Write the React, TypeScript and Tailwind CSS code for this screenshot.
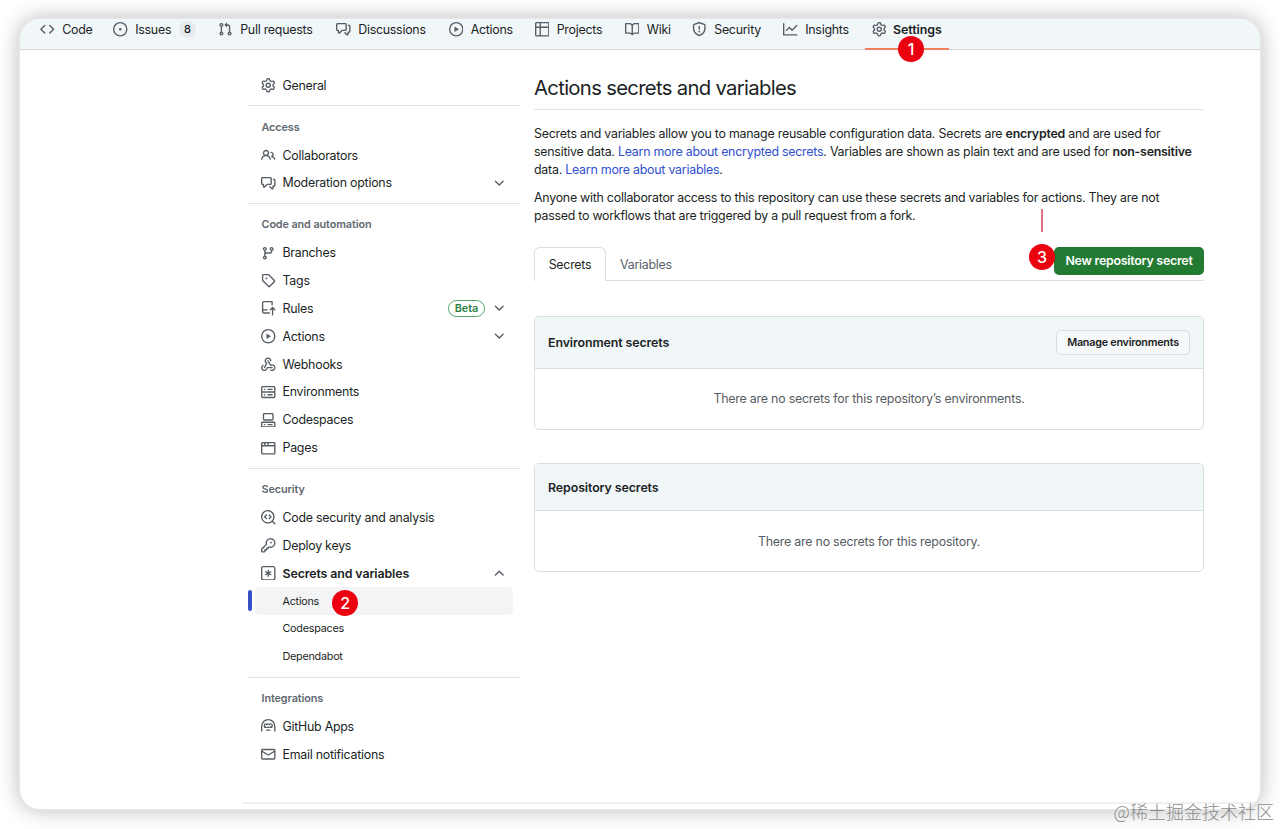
import React from "react";

// 16px octicon outlines
const paths: Record<string, string> = {
    code: "m11.28 3.22 4.25 4.25a.75.75 0 0 1 0 1.06l-4.25 4.25a.749.749 0 0 1-1.275-.326.749.749 0 0 1 .215-.734L13.94 8l-3.72-3.72a.749.749 0 0 1 .326-1.275.749.749 0 0 1 .734.215Zm-6.56 0a.751.751 0 0 1 1.042.018.751.751 0 0 1 .018 1.042L2.06 8l3.72 3.72a.749.749 0 0 1-.326 1.275.749.749 0 0 1-.734-.215L.47 8.53a.75.75 0 0 1 0-1.06Z",
    issue: "M8 9.5a1.5 1.5 0 1 0 0-3 1.5 1.5 0 0 0 0 3ZM8 0a8 8 0 1 1 0 16A8 8 0 0 1 8 0ZM1.5 8a6.5 6.5 0 1 0 13 0 6.5 6.5 0 0 0-13 0Z",
    pull: "M1.5 3.25a2.25 2.25 0 1 1 3 2.122v5.256a2.251 2.251 0 1 1-1.5 0V5.372A2.25 2.25 0 0 1 1.5 3.25Zm5.677-.177L9.573.677A.25.25 0 0 1 10 .854V2.5h1A2.5 2.5 0 0 1 13.5 5v5.628a2.251 2.251 0 1 1-1.5 0V5a1 1 0 0 0-1-1h-1v1.646a.25.25 0 0 1-.427.177L7.177 3.427a.25.25 0 0 1 0-.354ZM3.75 2.5a.75.75 0 1 0 0 1.5.75.75 0 0 0 0-1.5Zm0 9.5a.75.75 0 1 0 0 1.5.75.75 0 0 0 0-1.5Zm8.25.75a.75.75 0 1 0 1.5 0 .75.75 0 0 0-1.5 0Z",
    discussion: "M1.75 1h8.5c.966 0 1.75.784 1.75 1.75v5.5A1.75 1.75 0 0 1 10.25 10H7.061l-2.574 2.573A1.458 1.458 0 0 1 2 11.543V10h-.25A1.75 1.75 0 0 1 0 8.25v-5.5C0 1.784.784 1 1.75 1ZM1.5 2.75v5.5c0 .138.112.25.25.25h1a.75.75 0 0 1 .75.75v2.19l2.72-2.72a.749.749 0 0 1 .53-.22h3.5a.25.25 0 0 0 .25-.25v-5.5a.25.25 0 0 0-.25-.25h-8.5a.25.25 0 0 0-.25.25Zm13 2a.25.25 0 0 0-.25-.25h-.5a.75.75 0 0 1 0-1.5h.5c.966 0 1.75.784 1.75 1.75v5.5A1.75 1.75 0 0 1 14.25 12H14v1.543a1.458 1.458 0 0 1-2.487 1.03L9.22 12.28a.749.749 0 0 1 .326-1.275.749.749 0 0 1 .734.215l2.22 2.22v-2.19a.75.75 0 0 1 .75-.75h1a.25.25 0 0 0 .25-.25Z",
    play: "M8 0a8 8 0 1 1 0 16A8 8 0 0 1 8 0ZM1.5 8a6.5 6.5 0 1 0 13 0 6.5 6.5 0 0 0-13 0Zm4.879-2.773 4.264 2.559a.25.25 0 0 1 0 .428l-4.264 2.559A.25.25 0 0 1 6 10.559V5.442a.25.25 0 0 1 .379-.215Z",
    table: "M0 1.75C0 .784.784 0 1.75 0h12.5C15.216 0 16 .784 16 1.75v12.5A1.75 1.75 0 0 1 14.25 16H1.75A1.75 1.75 0 0 1 0 14.25ZM6.5 6.5v8h7.75a.25.25 0 0 0 .25-.25V6.5Zm8-1.5V1.75a.25.25 0 0 0-.25-.25H6.5V5Zm-13 1.5v7.75c0 .138.112.25.25.25H5v-8ZM5 5V1.5H1.75a.25.25 0 0 0-.25.25V5Z",
    book: "M0 1.75A.75.75 0 0 1 .75 1h4.253c1.227 0 2.317.59 3 1.501A3.743 3.743 0 0 1 11.006 1h4.245a.75.75 0 0 1 .75.75v10.5a.75.75 0 0 1-.75.75h-4.507a2.25 2.25 0 0 0-1.591.659l-.622.621a.75.75 0 0 1-1.06 0l-.622-.621A2.25 2.25 0 0 0 5.258 13H.75a.75.75 0 0 1-.75-.75Zm7.251 10.324.004-5.073-.002-2.253A2.25 2.25 0 0 0 5.003 2.5H1.5v9h3.757a3.75 3.75 0 0 1 1.994.574ZM8.755 4.75l-.004 7.322a3.752 3.752 0 0 1 1.992-.572H14.5v-9h-3.495a2.25 2.25 0 0 0-2.25 2.25Z",
    shield: "M7.467.133a1.748 1.748 0 0 1 1.066 0l5.25 1.68A1.75 1.75 0 0 1 15 3.48V7c0 1.566-.32 3.182-1.303 4.682-.983 1.498-2.585 2.813-5.032 3.855a1.697 1.697 0 0 1-1.33 0c-2.447-1.042-4.049-2.357-5.032-3.855C1.32 10.182 1 8.566 1 7V3.48a1.75 1.75 0 0 1 1.217-1.667Zm.61 1.429a.25.25 0 0 0-.153 0l-5.25 1.68a.25.25 0 0 0-.174.238V7c0 1.358.275 2.666 1.057 3.86.784 1.194 2.121 2.34 4.366 3.297a.196.196 0 0 0 .154 0c2.245-.956 3.582-2.104 4.366-3.298C13.225 9.666 13.5 8.36 13.5 7V3.48a.251.251 0 0 0-.174-.237l-5.25-1.68ZM8.75 4.75v3a.75.75 0 0 1-1.5 0v-3a.75.75 0 0 1 1.5 0ZM9 10.5a1 1 0 1 1-2 0 1 1 0 0 1 2 0Z",
    graph: "M1.5 1.75V13.5h13.75a.75.75 0 0 1 0 1.5H.75a.75.75 0 0 1-.75-.75V1.75a.75.75 0 0 1 1.5 0Zm14.28 2.53-5.25 5.25a.75.75 0 0 1-1.06 0L7 7.06 4.28 9.78a.751.751 0 0 1-1.042-.018.751.751 0 0 1-.018-1.042l3.25-3.25a.75.75 0 0 1 1.06 0L10 7.94l4.72-4.72a.751.751 0 0 1 1.042.018.751.751 0 0 1 .018 1.042Z",
    gear: "M8 0a8.2 8.2 0 0 1 .701.031C9.444.095 9.99.645 10.16 1.29l.288 1.107c.018.066.079.158.212.224.231.114.454.243.668.386.123.082.233.09.299.071l1.103-.303c.644-.176 1.392.021 1.82.63.27.385.506.792.704 1.218.315.675.111 1.422-.364 1.891l-.814.806c-.049.048-.098.147-.088.294.016.257.016.515 0 .772-.01.147.038.246.088.294l.814.806c.475.469.679 1.216.364 1.891a7.977 7.977 0 0 1-.704 1.217c-.428.61-1.176.807-1.82.63l-1.102-.302c-.067-.019-.177-.011-.3.071a5.909 5.909 0 0 1-.668.386c-.133.066-.194.158-.211.224l-.29 1.106c-.168.646-.715 1.196-1.458 1.26a8.006 8.006 0 0 1-1.402 0c-.743-.064-1.289-.614-1.458-1.26l-.289-1.106c-.018-.066-.079-.158-.212-.224a5.738 5.738 0 0 1-.668-.386c-.123-.082-.233-.09-.299-.071l-1.103.303c-.644.176-1.392-.021-1.82-.63a8.12 8.12 0 0 1-.704-1.218c-.315-.675-.111-1.422.363-1.891l.815-.806c.05-.048.098-.147.088-.294a6.214 6.214 0 0 1 0-.772c.01-.147-.038-.246-.088-.294l-.815-.806C.635 6.045.431 5.298.746 4.623a7.92 7.92 0 0 1 .704-1.217c.428-.61 1.176-.807 1.82-.63l1.102.302c.067.019.177.011.3-.071.214-.143.437-.272.668-.386.133-.066.194-.158.211-.224l.29-1.106C6.009.645 6.556.095 7.299.03 7.53.01 7.764 0 8 0Zm-.571 1.525c-.036.003-.108.036-.137.146l-.289 1.105c-.147.561-.549.967-.998 1.189-.173.086-.34.183-.5.29-.417.278-.97.423-1.529.27l-1.103-.303c-.109-.03-.175.016-.195.045-.22.312-.412.644-.573.99-.014.031-.021.11.059.19l.815.806c.411.406.562.957.53 1.456a4.709 4.709 0 0 0 0 .582c.032.499-.119 1.05-.53 1.456l-.815.806c-.081.08-.073.159-.059.19.162.346.353.677.573.989.02.03.085.076.195.046l1.102-.303c.56-.153 1.113-.008 1.53.27.161.107.328.204.501.29.447.222.85.629.997 1.189l.289 1.105c.029.109.101.143.137.146a6.6 6.6 0 0 0 1.142 0c.036-.003.108-.036.137-.146l.289-1.105c.147-.561.549-.967.998-1.189.173-.086.34-.183.5-.29.417-.278.97-.423 1.529-.27l1.103.303c.109.029.175-.016.195-.045.22-.313.411-.644.573-.99.014-.031.021-.11-.059-.19l-.815-.806c-.411-.406-.562-.957-.53-1.456a4.709 4.709 0 0 0 0-.582c-.032-.499.119-1.05.53-1.456l.815-.806c.081-.08.073-.159.059-.19a6.464 6.464 0 0 0-.573-.989c-.02-.03-.085-.076-.195-.046l-1.102.303c-.56.153-1.113.008-1.53-.27a4.44 4.44 0 0 0-.501-.29c-.447-.222-.85-.629-.997-1.189l-.289-1.105c-.029-.11-.101-.143-.137-.146a6.6 6.6 0 0 0-1.142 0ZM11 8a3 3 0 1 1-6 0 3 3 0 0 1 6 0ZM9.5 8a1.5 1.5 0 1 0-3.001.001A1.5 1.5 0 0 0 9.5 8Z",
    people: "M2 5.5a3.5 3.5 0 1 1 5.898 2.549 5.508 5.508 0 0 1 3.034 4.084.75.75 0 1 1-1.482.235 4 4 0 0 0-7.9 0 .75.75 0 0 1-1.482-.236A5.507 5.507 0 0 1 3.102 8.05 3.493 3.493 0 0 1 2 5.5ZM11 4a3.001 3.001 0 0 1 2.22 5.018 5.01 5.01 0 0 1 2.56 3.012.749.749 0 0 1-.885.954.752.752 0 0 1-.549-.514 3.507 3.507 0 0 0-2.522-2.372.75.75 0 0 1-.574-.73v-.352a.75.75 0 0 1 .416-.672A1.5 1.5 0 0 0 11 5.5.75.75 0 0 1 11 4Zm-5.5-.5a2 2 0 1 0-.001 3.999A2 2 0 0 0 5.5 3.5Z",
    branch: "M9.5 3.25a2.25 2.25 0 1 1 3 2.122V6A2.5 2.5 0 0 1 10 8.5H6a1 1 0 0 0-1 1v1.128a2.251 2.251 0 1 1-1.5 0V5.372a2.25 2.25 0 1 1 1.5 0v1.836A2.493 2.493 0 0 1 6 7h4a1 1 0 0 0 1-1v-.628A2.25 2.25 0 0 1 9.5 3.25Zm-6 0a.75.75 0 1 0 1.5 0 .75.75 0 0 0-1.5 0Zm8.25-.75a.75.75 0 1 0 0 1.5.75.75 0 0 0 0-1.5ZM4.25 12a.75.75 0 1 0 0 1.5.75.75 0 0 0 0-1.5Z",
    tag: "M1 7.775V2.75C1 1.784 1.784 1 2.75 1h5.025c.464 0 .91.184 1.238.513l6.25 6.25a1.75 1.75 0 0 1 0 2.474l-5.026 5.026a1.75 1.75 0 0 1-2.474 0l-6.25-6.25A1.752 1.752 0 0 1 1 7.775Zm1.5 0c0 .066.026.13.073.177l6.25 6.25a.25.25 0 0 0 .354 0l5.025-5.025a.25.25 0 0 0 0-.354l-6.25-6.25a.25.25 0 0 0-.177-.073H2.75a.25.25 0 0 0-.25.25ZM6 5a1 1 0 1 1 0 2 1 1 0 0 1 0-2Z",
    push: "M1 2.5A2.5 2.5 0 0 1 3.5 0h8.75a.75.75 0 0 1 .75.75v3.5a.75.75 0 0 1-1.5 0V1.5h-8a1 1 0 0 0-1 1v6.708A2.493 2.493 0 0 1 3.5 9h3.25a.75.75 0 0 1 0 1.5H3.5a1 1 0 0 0 0 2h5.75a.75.75 0 0 1 0 1.5H3.5A2.5 2.5 0 0 1 1 11.5Zm12.5 12.75a.75.75 0 0 1-1.5 0V9.06l-1.22 1.22a.75.75 0 0 1-1.06-1.06l2.5-2.5a.75.75 0 0 1 1.06 0l2.5 2.5a.75.75 0 0 1-1.06 1.06L13.5 9.06Z",
    webhook: "M5.5 4.25a2.25 2.25 0 0 1 4.5 0 .75.75 0 0 0 1.5 0 3.75 3.75 0 1 0-6.14 2.889l-2.272 4.258a.75.75 0 0 0 1.324.706L7 7.25a.75.75 0 0 0-.309-1.015A2.25 2.25 0 0 1 5.5 4.25ZM7.364 3.607a.75.75 0 0 1 1.03.257l2.608 4.349a3.75 3.75 0 1 1-.628 6.785.75.75 0 0 1 .752-1.299 2.25 2.25 0 1 0-.033-3.88.75.75 0 0 1-1.03-.256L7.107 4.636a.75.75 0 0 1 .257-1.03ZM2.9 8.776A.75.75 0 0 1 2.625 9.8 2.25 2.25 0 1 0 6 11.75a.75.75 0 0 1 .75-.751h5.5a.75.75 0 0 1 0 1.5H7.425a3.751 3.751 0 1 1-5.55-3.998.75.75 0 0 1 1.024.274Z",
    server: "M1.75 1h12.5c.966 0 1.75.784 1.75 1.75v4c0 .372-.116.717-.314 1 .198.283.314.628.314 1v4a1.75 1.75 0 0 1-1.75 1.75H1.75A1.75 1.75 0 0 1 0 12.75v-4c0-.358.109-.707.314-1a1.739 1.739 0 0 1-.314-1v-4C0 1.784.784 1 1.75 1ZM1.5 2.75v4c0 .138.112.25.25.25h12.5a.25.25 0 0 0 .25-.25v-4a.25.25 0 0 0-.25-.25H1.75a.25.25 0 0 0-.25.25Zm.25 5.75a.25.25 0 0 0-.25.25v4c0 .138.112.25.25.25h12.5a.25.25 0 0 0 .25-.25v-4a.25.25 0 0 0-.25-.25ZM7 4.75A.75.75 0 0 1 7.75 4h4.5a.75.75 0 0 1 0 1.5h-4.5A.75.75 0 0 1 7 4.75ZM7.75 10h4.5a.75.75 0 0 1 0 1.5h-4.5a.75.75 0 0 1 0-1.5ZM3 4.75A.75.75 0 0 1 3.75 4h.5a.75.75 0 0 1 0 1.5h-.5A.75.75 0 0 1 3 4.75ZM3.75 10h.5a.75.75 0 0 1 0 1.5h-.5a.75.75 0 0 1 0-1.5Z",
    codespaces: "M0 11.25c0-.966.784-1.75 1.75-1.75h12.5c.966 0 1.75.784 1.75 1.75v3A1.75 1.75 0 0 1 14.25 16H1.75A1.75 1.75 0 0 1 0 14.25Zm2-9.5C2 .784 2.784 0 3.75 0h8.5C13.216 0 14 .784 14 1.75v5a1.75 1.75 0 0 1-1.75 1.75h-8.5A1.75 1.75 0 0 1 2 6.75Zm1.75-.25a.25.25 0 0 0-.25.25v5c0 .138.112.25.25.25h8.5a.25.25 0 0 0 .25-.25v-5a.25.25 0 0 0-.25-.25Zm-2 9.5a.25.25 0 0 0-.25.25v3c0 .138.112.25.25.25h12.5a.25.25 0 0 0 .25-.25v-3a.25.25 0 0 0-.25-.25ZM7 12.75a.75.75 0 0 1 .75-.75h4.5a.75.75 0 0 1 0 1.5h-4.5a.75.75 0 0 1-.75-.75Zm-4 0a.75.75 0 0 1 .75-.75h.5a.75.75 0 0 1 0 1.5h-.5a.75.75 0 0 1-.75-.75Z",
    browser: "M0 2.75C0 1.784.784 1 1.75 1h12.5c.966 0 1.75.784 1.75 1.75v10.5A1.75 1.75 0 0 1 14.25 15H1.75A1.75 1.75 0 0 1 0 13.25ZM14.5 6h-13v7.25c0 .138.112.25.25.25h12.5a.25.25 0 0 0 .25-.25Zm-6-3.5v2h6V2.75a.25.25 0 0 0-.25-.25ZM5 2.5v2h2v-2Zm-3.25 0a.25.25 0 0 0-.25.25V4.5h2v-2Z",
    codescan: "M8.47 4.97a.75.75 0 0 0 0 1.06L9.94 7.5 8.47 8.97a.75.75 0 1 0 1.06 1.06l2-2a.75.75 0 0 0 0-1.06l-2-2a.75.75 0 0 0-1.06 0ZM6.53 6.03a.75.75 0 0 0-1.06-1.06l-2 2a.75.75 0 0 0 0 1.06l2 2a.75.75 0 1 0 1.06-1.06L5.06 7.5l1.47-1.47ZM12.246 13.307a7.501 7.501 0 1 1 1.06-1.06l2.474 2.473a.749.749 0 0 1-.326 1.275.749.749 0 0 1-.734-.215ZM1.5 7.5a6.002 6.002 0 0 0 3.608 5.504 6.002 6.002 0 0 0 6.486-1.117.748.748 0 0 1 .292-.293A6 6 0 1 0 1.5 7.5Z",
    key: "M10.5 0a5.499 5.499 0 1 1-1.288 10.848l-.932.932a.749.749 0 0 1-.53.22H7v.75a.749.749 0 0 1-.22.53l-.5.5a.749.749 0 0 1-.53.22H5v.75a.749.749 0 0 1-.22.53l-.5.5a.749.749 0 0 1-.53.22h-2A1.75 1.75 0 0 1 0 14.25v-2c0-.199.079-.389.22-.53l4.932-4.932A5.5 5.5 0 0 1 10.5 0Zm-4 5.5c-.001.431.069.86.205 1.269a.75.75 0 0 1-.181.768L1.5 12.56v1.69c0 .138.112.25.25.25h1.69l.06-.06v-1.19a.75.75 0 0 1 .75-.75h1.19l.06-.06v-1.19a.75.75 0 0 1 .75-.75h1.19l1.023-1.025a.75.75 0 0 1 .768-.18A4 4 0 1 0 6.5 5.5ZM11 6a1 1 0 1 1 0-2 1 1 0 0 1 0 2Z",
    asterisk: "M0 2.75A2.75 2.75 0 0 1 2.75 0h10.5A2.75 2.75 0 0 1 16 2.75v10.5A2.75 2.75 0 0 1 13.25 16H2.75A2.75 2.75 0 0 1 0 13.25ZM2.75 1.5c-.69 0-1.25.56-1.25 1.25v10.5c0 .69.56 1.25 1.25 1.25h10.5c.69 0 1.25-.56 1.25-1.25V2.75c0-.69-.56-1.25-1.25-1.25ZM8 4a.75.75 0 0 1 .75.75V6.7l1.69-.975a.75.75 0 0 1 .75 1.3L9.5 8l1.69.976a.75.75 0 0 1-.75 1.298L8.75 9.3v1.951a.75.75 0 0 1-1.5 0V9.299l-1.69.976a.75.75 0 0 1-.75-1.3L6.5 8l-1.69-.975a.75.75 0 0 1 .75-1.3l1.69.976V4.75A.75.75 0 0 1 8 4Z",
    hubot: "M0 8a8 8 0 1 1 16 0v5.25a.75.75 0 0 1-1.5 0V8a6.5 6.5 0 1 0-13 0v5.25a.75.75 0 0 1-1.5 0V8Zm5.5 4.25a.75.75 0 0 1 .75-.75h3.5a.75.75 0 0 1 0 1.5h-3.5a.75.75 0 0 1-.75-.75ZM3 6.75C3 5.784 3.784 5 4.75 5h6.5c.966 0 1.75.784 1.75 1.75v1.5A1.75 1.75 0 0 1 11.25 10h-6.5A1.75 1.75 0 0 1 3 8.25Zm1.47-.53a.75.75 0 0 1 1.06 0l.97.97.97-.97a.75.75 0 0 1 1.06 0l.97.97.97-.97a.75.75 0 1 1 1.06 1.06l-1.5 1.5a.75.75 0 0 1-1.06 0L8 7.81l-.97.97a.75.75 0 0 1-1.06 0l-1.5-1.5a.75.75 0 0 1 0-1.06Z",
    mail: "M1.75 2h12.5c.966 0 1.75.784 1.75 1.75v8.5A1.75 1.75 0 0 1 14.25 14H1.75A1.75 1.75 0 0 1 0 12.25v-8.5C0 2.784.784 2 1.75 2ZM1.5 12.251c0 .138.112.25.25.25h12.5a.25.25 0 0 0 .25-.25V5.809L8.38 9.397a.75.75 0 0 1-.76 0L1.5 5.809v6.442Zm13-8.181v-.32a.25.25 0 0 0-.25-.25H1.75a.25.25 0 0 0-.25.25v.32L8 7.88Z",
    down: "M12.78 5.22a.749.749 0 0 1 0 1.06l-4.25 4.25a.749.749 0 0 1-1.06 0L3.22 6.28a.749.749 0 1 1 1.06-1.06L8 8.939l3.72-3.719a.749.749 0 0 1 1.06 0Z",
    up: "M3.22 10.53a.749.749 0 0 1 0-1.06l4.25-4.25a.749.749 0 0 1 1.06 0l4.25 4.25a.749.749 0 1 1-1.06 1.06L8 6.811 4.28 10.53a.749.749 0 0 1-1.06 0Z",
};

const Icon = ({ name }: { name: string }) => (
    <svg viewBox="0 0 16 16" className="w-[14.5px] h-[14.5px] shrink-0 fill-[#565d65]" fillRule="evenodd">
        <path d={paths[name]} />
    </svg>
);

const Step = ({ n }: { n: number }) => (
    <span className="flex h-[26px] w-[26px] items-center justify-center rounded-full bg-[#eb000f] pb-px text-[16px] font-medium leading-none text-white">{n}</span>
);

type NavItem = { icon: string; label: string; width: string; count?: number };

const nav: NavItem[] = [
    { icon: "code", label: "Code", width: "w-[73px]" },
    { icon: "issue", label: "Issues", width: "w-[105px]", count: 8 },
    { icon: "pull", label: "Pull requests", width: "w-[118px]" },
    { icon: "discussion", label: "Discussions", width: "w-[112.5px]" },
    { icon: "play", label: "Actions", width: "w-[86px]" },
    { icon: "table", label: "Projects", width: "w-[90px]" },
    { icon: "book", label: "Wiki", width: "w-[67.5px]" },
    { icon: "shield", label: "Security", width: "w-[91px]" },
    { icon: "graph", label: "Insights", width: "w-[82px]" },
];

type SideItem = { icon?: string; label: string; arrow?: string; beta?: boolean; bold?: boolean; active?: boolean };

const groups: { title: string; items: SideItem[] }[] = [
    {
        title: "Access",
        items: [
            { icon: "people", label: "Collaborators" },
            { icon: "discussion", label: "Moderation options", arrow: "down" },
        ],
    },
    {
        title: "Code and automation",
        items: [
            { icon: "branch", label: "Branches" },
            { icon: "tag", label: "Tags" },
            { icon: "push", label: "Rules", arrow: "down", beta: true },
            { icon: "play", label: "Actions", arrow: "down" },
            { icon: "webhook", label: "Webhooks" },
            { icon: "server", label: "Environments" },
            { icon: "codespaces", label: "Codespaces" },
            { icon: "browser", label: "Pages" },
        ],
    },
    {
        title: "Security",
        items: [
            { icon: "codescan", label: "Code security and analysis" },
            { icon: "key", label: "Deploy keys" },
            { icon: "asterisk", label: "Secrets and variables", arrow: "up", bold: true },
            { label: "Actions", active: true },
            { label: "Codespaces" },
            { label: "Dependabot" },
        ],
    },
    {
        title: "Integrations",
        items: [
            { icon: "hubot", label: "GitHub Apps" },
            { icon: "mail", label: "Email notifications" },
        ],
    },
];

const Header = () => (
    <nav className="flex h-[31px] items-start border-b border-[#d0d5d9] bg-[#f1f6f9] pl-[20px]">
        {nav.map((item) => (
            <div key={item.label} className={`flex h-[21px] shrink-0 items-center gap-[7.7px] ${item.width}`}>
                <Icon name={item.icon} />
                <span className="pt-[1.6px]">{item.label}</span>
                {item.count && <span className="flex h-[17px] w-[17px] items-center justify-center rounded-full bg-[#e6eaed] text-[11px] font-medium">{item.count}</span>}
            </div>
        ))}
        <div className="relative flex h-[31px] w-[84px] shrink-0 items-start border-b-2 border-b-[#f0805f] pl-[7px]">
            <div className="flex h-[21px] items-center gap-[6.5px]">
                <Icon name="gear" />
                <span className="pt-[1.6px] font-semibold tracking-[-0.05px]">Settings</span>
            </div>
            <div className="absolute left-[33px] top-[17px]"><Step n={1} /></div>
        </div>
    </nav>
);

const SideRow = ({ item }: { item: SideItem }) => (
    <li className={`relative mr-[7px] flex h-[27.85px] items-center gap-[6.9px] pr-[7px] ${item.active ? "ml-[7px] rounded-[5px] bg-[#f3f4f6] pl-[6.1px]" : "pl-[13.1px]"}`}>
        {item.active && <span className="absolute -left-[7.5px] top-[3px] h-[21px] w-[4px] rounded-sm bg-[#3650c8]"></span>}
        {item.icon ? <Icon name={item.icon} /> : <span className="w-[14.5px]"></span>}
        <span className={item.bold ? "pt-[1.2px] font-semibold tracking-[-0.12px]" : item.icon ? "pt-[1.2px]" : "pt-[1.2px] text-[10.8px]"}>{item.label}</span>
        {item.active && <div className="absolute left-[77px] top-[3px]"><Step n={2} /></div>}
        <span className="ml-auto flex items-center gap-[6.5px]">
            {item.beta && <span className="flex h-[17px] w-[37px] items-center justify-center rounded-full border border-[#55a269] pt-px text-[10.8px] font-semibold tracking-normal text-[#2a7f3e]">Beta</span>}
            {item.arrow && <Icon name={item.arrow} />}
        </span>
    </li>
);

const Sidebar = () => (
    <aside className="w-[272px]">
        <ul className="h-[55.3px] pt-[21.4px]">
            <SideRow item={{ icon: "gear", label: "General" }} />
        </ul>
        {groups.map((group) => (
            <section key={group.title} className="border-t border-[#e1e4e7] pb-[5.9px] pt-[7.2px]">
                <h3 className="flex h-[27.85px] items-center pl-[13.5px] pt-[0.8px] text-[10.8px] font-semibold tracking-[-0.08px] text-[#606870]">{group.title}</h3>
                <ul>
                    {group.items.map((item) => <SideRow key={item.label} item={item} />)}
                </ul>
            </section>
        ))}
    </aside>
);

const Main = () => (
    <main className="ml-[14px] w-[670px]">
        <h1 className="flex h-[60px] items-center border-b border-[#e2e5e8] pt-[17px] text-[20.3px] tracking-[-0.69px]">Actions secrets and variables</h1>
        <p className="mt-[15px] whitespace-nowrap leading-[18.2px] tracking-[-0.24px]">
            Secrets and variables allow you to manage reusable configuration data. Secrets are <b className="font-semibold">encrypted</b> and are used for<br />
            sensitive data. <a className="text-[#2f50cf]">Learn more about encrypted secrets</a>. Variables are shown as plain text and are used for <b className="font-semibold">non-sensitive</b><br />
            data. <a className="text-[#2f50cf]">Learn more about variables</a>.
        </p>
        <p className="mt-[9px] whitespace-nowrap leading-[18.2px]">
            Anyone with collaborator access to this repository can use these secrets and variables for actions. They are not<br />
            passed to workflows that are triggered by a pull request from a fork.
        </p>
        <div className="relative mt-[22px] flex h-[34px] items-start border-b border-[#d9dee1]">
            <div className="flex h-[34px] w-[72px] items-center justify-center rounded-t-md border border-b-0 border-[#d9dee1] bg-white pt-[2px]">Secrets</div>
            <div className="flex h-[34px] items-center pl-[14px] pt-[2.5px] text-[#59616a]">Variables</div>
            <button className="ml-auto h-[28px] w-[150px] rounded-[5px] bg-[#237b33] pt-[1.5px] font-semibold text-white">New repository secret</button>
            <span className="absolute left-[507px] -top-[38px] h-[23px] w-[2px] bg-[#dc7480]"></span>
            <div className="absolute left-[495px] -top-[3px]"><Step n={3} /></div>
        </div>
        <section className="mt-[35px] h-[114px] rounded-[5px] border border-[#d9dee1]">
            <div className="flex h-[52px] items-center justify-between rounded-t-[5px] border-b border-[#d9dee1] bg-[#f1f6f9] px-[13px]">
                <h2 className="pt-[1.6px] font-semibold tracking-[-0.1px]">Environment secrets</h2>
                <button className="h-[25px] w-[134px] rounded-[5px] border border-[#d9dde1] bg-[#f6f8fa] pt-[1.5px] text-[10.8px] font-semibold">Manage environments</button>
            </div>
            <p className="flex h-[60px] items-center justify-center pt-[1px] tracking-[-0.22px] text-[#565c62]">There are no secrets for this repository’s environments.</p>
        </section>
        <section className="mt-[33px] h-[109px] rounded-[5px] border border-[#d9dee1]">
            <div className="flex h-[47px] items-center rounded-t-[5px] border-b border-[#d9dee1] bg-[#f1f6f9] px-[13px] pt-[2.6px]">
                <h2 className="font-semibold tracking-[-0.1px]">Repository secrets</h2>
            </div>
            <p className="flex h-[60px] items-center justify-center pt-[2px] tracking-[-0.22px] text-[#565c62]">There are no secrets for this repository.</p>
        </section>
    </main>
);

const App = () => {
    return (
        <div className="relative h-[829px] w-[1280px] overflow-hidden bg-white px-[20px] pt-[19px] font-['Inter',sans-serif] text-[12.4px] tracking-[-0.25px] text-[#1b1f24]">
            <div className="flex h-[790px] flex-col overflow-hidden rounded-[20px] bg-white shadow-[0_0_0_1.5px_#e6e6e6,0_0_22px_rgba(0,0,0,0.3)]">
                <Header />
                <div className="flex flex-1 pl-[228px]">
                    <Sidebar />
                    <Main />
                </div>
                <div className="mb-[5px] ml-[222px] h-[2px] bg-[#f1f1f1]"></div>
            </div>
            <span className="absolute right-[6px] top-[799px] whitespace-nowrap font-['Noto_Sans_CJK_SC',sans-serif] text-[18px] font-light leading-[25px] tracking-normal text-[#8c8c8c]">@稀土掘金技术社区</span>
        </div>
    );
};

export default App;
